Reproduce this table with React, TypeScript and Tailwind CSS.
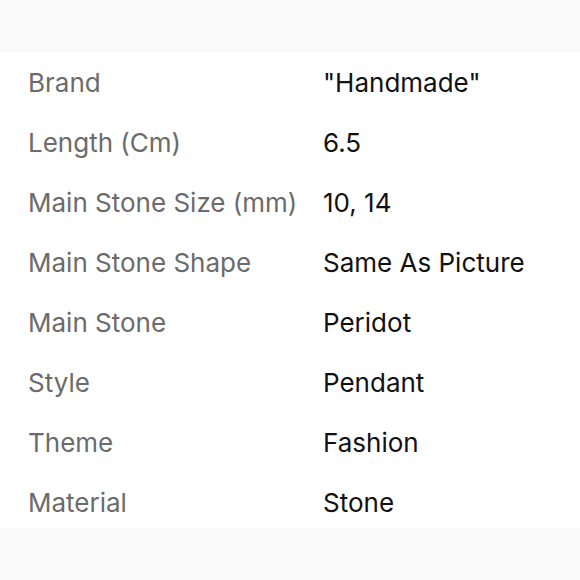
import React from "react";

const rows: [string, string][] = [
  ["Brand", '"Handmade"'],
  ["Length (Cm)", "6.5"],
  ["Main Stone Size (mm)", "10, 14"],
  ["Main Stone Shape", "Same As Picture"],
  ["Main Stone", "Peridot"],
  ["Style", "Pendant"],
  ["Theme", "Fashion"],
  ["Material", "Stone"],
];

export default function App() {
  return (
    <div className="w-[580px] h-[580px] bg-[#fafafa] flex flex-col overflow-hidden" style={{ fontFamily: "Inter, 'Noto Sans', sans-serif" }}>
      <div className="h-[52px] shrink-0" />
      <div className="bg-white flex flex-col">
        {rows.map(([k, v], i) => (
          <div key={k} className={`${i === rows.length - 1 ? "h-[56px]" : "h-[60px]"} flex items-start pt-[18px] text-[26px] leading-none`}>
            <div className="w-[323px] pl-[28px] text-[#6b6b6b]">{k}</div>
            <div className="text-[#111111]">{v}</div>
          </div>
        ))}
      </div>
    </div>
  );
}
